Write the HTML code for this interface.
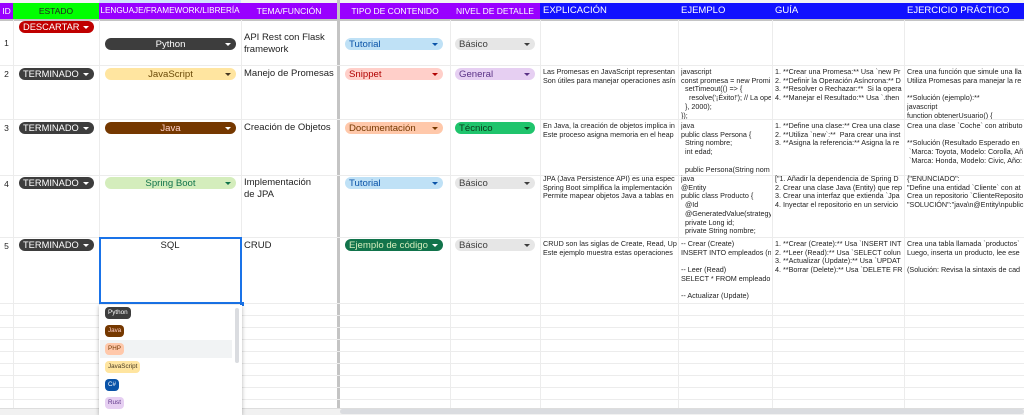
<!DOCTYPE html>
<html><head><meta charset="utf-8"><style>
*{margin:0;padding:0;box-sizing:border-box}
body{width:1024px;height:415px;overflow:hidden;background:#fff;font-family:"Liberation Sans",Arial,sans-serif;position:relative;color:#222}
.a{position:absolute}
.h{position:absolute;top:3px;height:16px;font-size:8.5px;line-height:16px;color:#fff;text-align:center;white-space:nowrap;overflow:hidden}
.hb{background:#1212ff;text-align:left;padding-left:3px;font-size:9.5px}
.vl{position:absolute;top:20px;width:1px;background:#ececec;height:390px}
.hl{position:absolute;left:0;width:1024px;height:1px;background:#ececec}
.chip{position:absolute;height:12px;border-radius:6px;font-size:9.6px;line-height:13px;white-space:nowrap;overflow:hidden}
.chip i{position:absolute;right:5px;top:5px;width:0;height:0;border-left:3px solid transparent;border-right:3px solid transparent;border-top:3px solid currentColor}
.c{text-align:center}
.l{padding-left:4px}
.e{padding-left:4px;font-size:9.3px}
.t{position:absolute;font-size:7.2px;line-height:8.7px;white-space:pre;overflow:hidden;color:#222}
.n{position:absolute;font-size:8.5px;left:0;width:13px;text-align:center}
.m{position:absolute;font-size:9.5px;line-height:12px}
.dchip{position:absolute;left:105px;height:12px;border-radius:4px;font-size:6.3px;line-height:12px;padding:0 3px}
</style></head><body>
<div class="a" style="left:0;top:0;width:1024px;height:3px;background:#f3f3f3"></div>
<div class="a" style="left:99px;top:0;width:142px;height:3px;background:#d3e3fd"></div>
<div class="h" style="left:0;width:13px;background:#9900ff">ID</div>
<div class="h" style="left:13px;width:86px;background:#00ff00;color:#222">ESTADO</div>
<div class="h" style="left:99px;width:142px;background:#9900ff;font-size:8.2px">LENGUAJE/FRAMEWORK/LIBRERÍA</div>
<div class="h" style="left:241px;width:96px;background:#9900ff">TEMA/FUNCIÓN</div>
<div class="h" style="left:340px;width:110px;background:#9900ff">TIPO DE CONTENIDO</div>
<div class="h" style="left:450px;width:90px;background:#9900ff">NIVEL DE DETALLE</div>
<div class="h hb" style="left:540px;width:138px">EXPLICACIÓN</div>
<div class="h hb" style="left:678px;width:94px">EJEMPLO</div>
<div class="h hb" style="left:772px;width:132px">GUÍA</div>
<div class="h hb" style="left:904px;width:120px">EJERCICIO PRÁCTICO</div>
<div class="a" style="left:0;top:19px;width:1024px;height:2px;background:#c4c4c4"></div>
<div class="a" style="left:337px;top:0;width:3px;height:410px;background:#c4c4c4"></div>

<div class="vl" style="left:13px"></div><div class="vl" style="left:99px"></div><div class="vl" style="left:241px"></div>
<div class="vl" style="left:450px"></div><div class="vl" style="left:540px"></div><div class="vl" style="left:678px"></div><div class="vl" style="left:772px"></div><div class="vl" style="left:904px"></div>
<div class="hl" style="top:65px"></div><div class="hl" style="top:119px"></div><div class="hl" style="top:175px"></div><div class="hl" style="top:237px"></div>
<div class="hl" style="top:303px"></div><div class="hl" style="top:315px"></div><div class="hl" style="top:327px"></div><div class="hl" style="top:339px"></div><div class="hl" style="top:351px"></div><div class="hl" style="top:363px"></div><div class="hl" style="top:375px"></div><div class="hl" style="top:387px"></div><div class="hl" style="top:399px"></div>
<div class="a" style="left:0;top:408px;width:1024px;height:7px;background:#f1f1f1;border-top:1px solid #ddd"></div>
<div class="a" style="left:340px;top:409px;width:684px;height:5px;background:#dadce0;border-radius:3px"></div>

<div class="n" style="top:38px">1</div><div class="n" style="top:69px">2</div><div class="n" style="top:123px">3</div><div class="n" style="top:179px">4</div><div class="n" style="top:241px">5</div>

<div class="chip e" style="left:19px;top:21px;width:75px;background:#c00000;color:#fff">DESCARTAR<i style="color:#fff"></i></div>
<div class="chip e" style="left:19px;top:68px;width:75px;background:#3d3d3d;color:#fff">TERMINADO<i></i></div>
<div class="chip e" style="left:19px;top:122px;width:75px;background:#3d3d3d;color:#fff">TERMINADO<i></i></div>
<div class="chip e" style="left:19px;top:177px;width:75px;background:#3d3d3d;color:#fff">TERMINADO<i></i></div>
<div class="chip e" style="left:19px;top:239px;width:75px;background:#3d3d3d;color:#fff">TERMINADO<i></i></div>

<div class="chip c" style="left:105px;top:38px;width:131px;background:#3d3d3d;color:#fff">Python<i></i></div>
<div class="chip c" style="left:105px;top:68px;width:131px;background:#ffe5a0;color:#6b4a08">JavaScript<i style="color:#473821"></i></div>
<div class="chip c" style="left:105px;top:122px;width:131px;background:#753800;color:#ffcfc9">Java<i style="color:#fff"></i></div>
<div class="chip c" style="left:105px;top:177px;width:131px;background:#d4edbc;color:#11734b">Spring Boot<i></i></div>

<div class="a" style="left:99px;top:237px;width:143px;height:67px;border:2px solid #1a73e8"></div>
<div class="a" style="left:240px;top:302px;width:4px;height:4px;background:#1a73e8"></div>
<div class="m" style="left:99px;top:240px;width:142px;text-align:center">SQL</div>

<div class="m" style="left:244px;top:32px">API Rest con Flask<br>framework</div>
<div class="m" style="left:244px;top:68px">Manejo de Promesas</div>
<div class="m" style="left:244px;top:122px">Creación de Objetos</div>
<div class="m" style="left:244px;top:177px">Implementación<br>de JPA</div>
<div class="m" style="left:244px;top:240px">CRUD</div>

<div class="chip l" style="left:345px;top:38px;width:98px;background:#bfe1f6;color:#0a53a8">Tutorial<i></i></div>
<div class="chip l" style="left:345px;top:68px;width:98px;background:#ffcfc9;color:#b10202">Snippet<i></i></div>
<div class="chip l" style="left:345px;top:122px;width:98px;background:#ffc8aa;color:#753800">Documentación<i></i></div>
<div class="chip l" style="left:345px;top:177px;width:98px;background:#bfe1f6;color:#0a53a8">Tutorial<i></i></div>
<div class="chip l" style="left:345px;top:239px;width:98px;background:#11734b;color:#d4edbc">Ejemplo de código<i style="color:#fff"></i></div>

<div class="chip l" style="left:455px;top:38px;width:80px;background:#e6e6e6;color:#3d3d3d">Básico<i></i></div>
<div class="chip l" style="left:455px;top:68px;width:80px;background:#e6cff2;color:#5a3286">General<i></i></div>
<div class="chip l" style="left:455px;top:122px;width:80px;background:#1fc46c;color:#0a3a1a">Técnico<i></i></div>
<div class="chip l" style="left:455px;top:177px;width:80px;background:#e6e6e6;color:#3d3d3d">Básico<i></i></div>
<div class="chip l" style="left:455px;top:239px;width:80px;background:#e6e6e6;color:#3d3d3d">Básico<i></i></div>

<div class="t" style="left:543px;top:68px;width:134px">Las Promesas en JavaScript representan
Son útiles para manejar operaciones asín</div>
<div class="t" style="left:543px;top:122px;width:134px">En Java, la creación de objetos implica in
Este proceso asigna memoria en el heap</div>
<div class="t" style="left:543px;top:175px;width:134px">JPA (Java Persistence API) es una espec
Spring Boot simplifica la implementación 
Permite mapear objetos Java a tablas en</div>
<div class="t" style="left:543px;top:240px;width:134px">CRUD son las siglas de Create, Read, Up
Este ejemplo muestra estas operaciones</div>

<div class="t" style="left:681px;top:68px;width:90px;height:51px">javascript
const promesa = new Promi
  setTimeout(() =&gt; {
    resolve('¡Éxito!'); // La ope
  }, 2000);
});</div>
<div class="t" style="left:681px;top:122px;width:90px;height:53px">java
public class Persona {
  String nombre;
  int edad;

  public Persona(String nom</div>
<div class="t" style="left:681px;top:175px;width:90px;height:62px">java
@Entity
public class Producto {
  @Id
  @GeneratedValue(strategy
  private Long id;
  private String nombre;</div>
<div class="t" style="left:681px;top:240px;width:90px;height:63px">-- Crear (Create)
INSERT INTO empleados (n

-- Leer (Read)
SELECT * FROM empleado

-- Actualizar (Update)</div>

<div class="t" style="left:775px;top:68px;width:128px">1. **Crear una Promesa:** Usa `new Pr
2. **Definir la Operación Asíncrona:** D
3. **Resolver o Rechazar:**  Si la opera
4. **Manejar el Resultado:** Usa `.then</div>
<div class="t" style="left:775px;top:122px;width:128px">1. **Define una clase:** Crea una clase
2. **Utiliza `new`:**  Para crear una inst
3. **Asigna la referencia:** Asigna la re</div>
<div class="t" style="left:775px;top:175px;width:128px">["1. Añadir la dependencia de Spring D
2. Crear una clase Java (Entity) que rep
3. Crear una interfaz que extienda `Jpa
4. Inyectar el repositorio en un servicio</div>
<div class="t" style="left:775px;top:240px;width:128px">1. **Crear (Create):** Usa `INSERT INT
2. **Leer (Read):** Usa `SELECT colun
3. **Actualizar (Update):** Usa `UPDAT
4. **Borrar (Delete):** Usa `DELETE FR</div>

<div class="t" style="left:907px;top:68px;width:117px;height:51px">Crea una función que simule una lla
Utiliza Promesas para manejar la re

**Solución (ejemplo):**
javascript
function obtenerUsuario() {</div>
<div class="t" style="left:907px;top:122px;width:117px">Crea una clase `Coche` con atributo

**Solución (Resultado Esperado en
 `Marca: Toyota, Modelo: Corolla, Añ
 `Marca: Honda, Modelo: Civic, Año:</div>
<div class="t" style="left:907px;top:175px;width:117px">{"ENUNCIADO":
"Define una entidad `Cliente` con at
Crea un repositorio `ClienteReposito
"SOLUCIÓN":"java\n@Entity\npublic</div>
<div class="t" style="left:907px;top:240px;width:117px">Crea una tabla llamada `productos`
Luego, inserta un producto, lee ese

(Solución: Revisa la sintaxis de cad</div>

<div class="a" style="left:99px;top:305px;width:143px;height:110px;background:#fff;box-shadow:0 1px 4px rgba(0,0,0,.3)"></div>
<div class="a" style="left:100px;top:340px;width:132px;height:18px;background:#f1f3f4"></div>
<div class="a" style="left:235px;top:308px;width:4px;height:55px;background:#dadce0;border-radius:2px"></div>
<div class="dchip" style="top:307px;background:#3d3d3d;color:#fff">Python</div>
<div class="dchip" style="top:325px;background:#753800;color:#ffcfc9">Java</div>
<div class="dchip" style="top:343px;background:#ffc8aa;color:#753800">PHP</div>
<div class="dchip" style="top:361px;background:#ffe5a0;color:#473821">JavaScript</div>
<div class="dchip" style="top:379px;background:#0a53a8;color:#fff">C#</div>
<div class="dchip" style="top:397px;background:#e6cff2;color:#5a3286">Rust</div>
</body></html>
